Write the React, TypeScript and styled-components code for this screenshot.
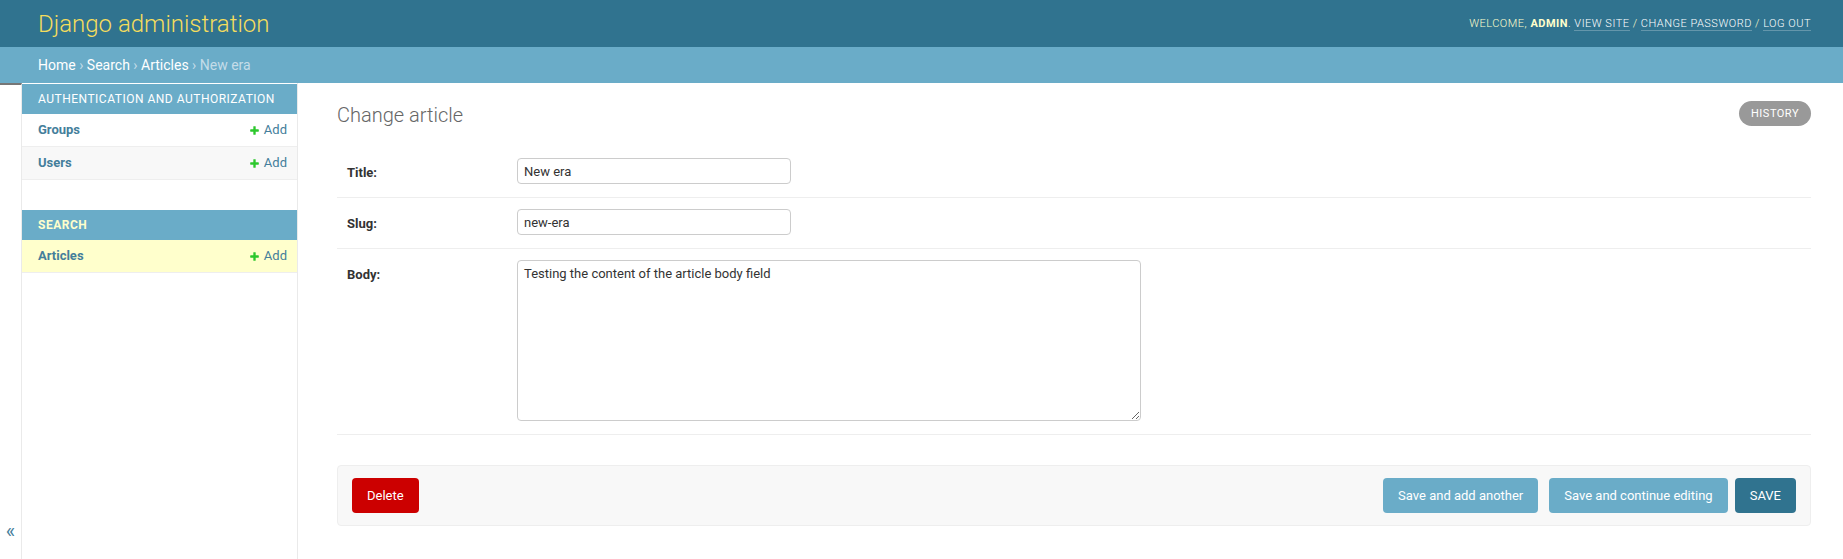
import React from "react";
import styled, { createGlobalStyle } from "styled-components";

const GlobalStyle = createGlobalStyle`
  * { box-sizing: border-box; }
  html, body { margin: 0; padding: 0; height: 100%; }
  body {
    font-family: Roboto, "Liberation Sans", Arial, sans-serif;
    font-size: 14px;
    color: #333;
    background: #fff;
  }
  #root { min-height: 100%; display: flex; flex-direction: column; }
`;

const Page = styled.div`
  flex: 1;
  display: flex;
  flex-direction: column;
  min-height: 100vh;
`;

const Header = styled.header`
  height: 47px;
  padding: 0 32px 0 38px;
  display: flex;
  align-items: center;
  justify-content: space-between;
  background: #30738f;
  color: #ffc;
`;

const Branding = styled.h1`
  margin: 0;
  font-size: 24px;
  font-weight: 300;
  line-height: 28px;
  color: #f5dd5d;
`;

const UserTools = styled.div`
  font-size: 11px;
  font-weight: 300;
  letter-spacing: 0.5px;
  text-transform: uppercase;
  color: #ffc;
  line-height: 16px;
  strong { font-weight: 700; }
`;

const ToolLink = styled.a`
  color: #fff;
  text-decoration: none;
  border-bottom: 1px solid rgba(255, 255, 255, 0.25);
`;

const Breadcrumbs = styled.nav`
  padding: 10px 38px;
  background: #6aacc8;
  color: #c4dce8;
  font-size: 14px;
  line-height: 16px;
  a { color: #fff; text-decoration: none; }
`;

const Main = styled.div`
  flex: 1;
  display: flex;
`;

const ToggleSidebar = styled.div`
  flex: 0 0 22px;
  width: 22px;
  border-top: 2px solid #767676;
  border-right: 1px solid #eaeaea;
  display: flex;
  flex-direction: column;
  justify-content: flex-end;
  align-items: center;
  padding-bottom: 16px;
  color: #447e9b;
  font-size: 20px;
  line-height: 23px;
`;

const NavSidebar = styled.nav`
  flex: 0 0 276px;
  width: 276px;
  border-right: 1px solid #eaeaea;
  padding-top: 1px;
`;

const AppModule = styled.div`
  margin-bottom: 30px;
`;

const ModuleCaption = styled.div<{ $current?: boolean }>`
  padding: 8px 8px 8px 16px;
  background: #6aacc8;
  font-size: 12px;
  line-height: 14px;
  letter-spacing: 0.5px;
  text-transform: uppercase;
  white-space: nowrap;
  color: ${(p) => (p.$current ? "#ffc" : "#fff")};
  font-weight: ${(p) => (p.$current ? 700 : 400)};
`;

const ModelRow = styled.div<{ $bg: string }>`
  display: flex;
  justify-content: space-between;
  align-items: center;
  padding: 8px 10px 8px 16px;
  line-height: 16px;
  font-size: 13px;
  background: ${(p) => p.$bg};
  border-bottom: 1px solid #eee;
`;

const ModelLink = styled.a`
  color: #447e9b;
  font-weight: 700;
  text-decoration: none;
`;

const AddLink = styled.a`
  display: flex;
  align-items: center;
  gap: 4px;
  color: #447e9b;
  text-decoration: none;
  svg { display: block; }
`;

const Content = styled.main`
  flex: 1;
  padding: 21px 32px 20px 39px;
  min-width: 0;
`;

const TitleBar = styled.div`
  display: flex;
  justify-content: space-between;
  align-items: flex-start;
  margin-bottom: 20px;
`;

const PageTitle = styled.h1`
  margin: 0;
  font-size: 20px;
  font-weight: 300;
  line-height: 23px;
  color: #666;
`;

const HistoryLink = styled.a`
  margin-top: -3px;
  display: block;
  padding: 3px 12px;
  line-height: 19px;
  font-size: 11px;
  letter-spacing: 0.5px;
  text-transform: uppercase;
  background: #999;
  color: #fff;
  border-radius: 15px;
  text-decoration: none;
`;

const Fieldset = styled.fieldset`
  margin: 0 0 30px;
  padding: 0;
  border: 0;
  min-width: 0;
`;

const FormRow = styled.div`
  display: flex;
  align-items: flex-start;
  padding: 11px 10px 13px;
  border-bottom: 1px solid #eee;
  font-size: 13px;
`;

const Label = styled.label`
  flex: 0 0 170px;
  padding: 7px 10px 0 0;
  line-height: 16px;
  font-weight: 700;
  color: #333;
`;

const TextInput = styled.input`
  width: 274px;
  height: 26px;
  padding: 5px 6px;
  border: 1px solid #ccc;
  border-radius: 4px;
  font-family: Roboto, "Liberation Sans", Arial, sans-serif;
  font-size: 13px;
  color: #333;
  background: #fff;
  margin: 0;
`;

const TextArea = styled.textarea`
  width: 624px;
  height: 161px;
  padding: 5px 6px;
  border: 1px solid #ccc;
  border-radius: 4px;
  font-family: Roboto, "Liberation Sans", Arial, sans-serif;
  font-size: 13px;
  line-height: 15px;
  color: #333;
  margin: 0;
  display: block;
`;

const SubmitRow = styled.div`
  display: flex;
  justify-content: space-between;
  align-items: center;
  padding: 12px 14px;
  background: #f8f8f8;
  border: 1px solid #eee;
  border-radius: 4px;
`;

const ButtonGroup = styled.div`
  display: flex;
`;

const bgFor = { primary: "#6aacc8", default: "#30738f", delete: "#cc0000" } as const;

const Button = styled.button<{ $variant: keyof typeof bgFor; $gap?: number }>`
  display: block;
  margin-left: ${(p) => p.$gap ?? 0}px;
  padding: 10px 15px;
  border: none;
  border-radius: 4px;
  background: ${(p) => bgFor[p.$variant]};
  color: #fff;
  font-family: Roboto, "Liberation Sans", Arial, sans-serif;
  font-size: 13px;
  line-height: 15px;
  text-transform: ${(p) => (p.$variant === "default" ? "uppercase" : "none")};
  cursor: pointer;
`;

const PlusIcon = () => (
  <svg width="11" height="11" viewBox="0 0 1792 1792" aria-hidden="true">
    <path
      fill="#2cc72c"
      d="M1600 796v192q0 40-28 68t-68 28h-416v416q0 40-28 68t-68 28h-192q-40 0-68-28t-28-68v-416h-416q-40 0-68-28t-28-68v-192q0-40 28-68t68-28h416v-416q0-40 28-68t68-28h192q40 0 68 28t28 68v416h416q40 0 68 28t28 68z"
    />
  </svg>
);

type AppDef = { name: string; current?: boolean; models: { name: string; current?: boolean }[] };

const apps: AppDef[] = [
  { name: "Authentication and Authorization", models: [{ name: "Groups" }, { name: "Users" }] },
  { name: "Search", current: true, models: [{ name: "Articles", current: true }] },
];

export default function App() {
  return (
    <Page>
      <GlobalStyle />
      <Header>
        <Branding>Django administration</Branding>
        <UserTools>
          Welcome, <strong>admin</strong>. <ToolLink href="#">View site</ToolLink> /{" "}
          <ToolLink href="#">Change password</ToolLink> / <ToolLink href="#">Log out</ToolLink>
        </UserTools>
      </Header>
      <Breadcrumbs>
        <a href="#">Home</a> › <a href="#">Search</a> › <a href="#">Articles</a> › New era
      </Breadcrumbs>
      <Main>
        <ToggleSidebar>«</ToggleSidebar>
        <NavSidebar>
          {apps.map((app) => (
            <AppModule key={app.name}>
              <ModuleCaption $current={app.current}>{app.name}</ModuleCaption>
              {app.models.map((m, i) => (
                <ModelRow key={m.name} $bg={m.current ? "#ffc" : i % 2 === 1 ? "#f8f8f8" : "#fff"}>
                  <ModelLink href="#">{m.name}</ModelLink>
                  <AddLink href="#">
                    <PlusIcon />
                    Add
                  </AddLink>
                </ModelRow>
              ))}
            </AppModule>
          ))}
        </NavSidebar>
        <Content>
          <TitleBar>
            <PageTitle>Change article</PageTitle>
            <HistoryLink href="#">History</HistoryLink>
          </TitleBar>
          <Fieldset>
            <FormRow>
              <Label htmlFor="id_title">Title:</Label>
              <TextInput id="id_title" type="text" defaultValue="New era" />
            </FormRow>
            <FormRow>
              <Label htmlFor="id_slug">Slug:</Label>
              <TextInput id="id_slug" type="text" defaultValue="new-era" />
            </FormRow>
            <FormRow>
              <Label htmlFor="id_body">Body:</Label>
              <TextArea id="id_body" defaultValue="Testing the content of the article body field" />
            </FormRow>
          </Fieldset>
          <SubmitRow>
            <Button $variant="delete">Delete</Button>
            <ButtonGroup>
              <Button $variant="primary">Save and add another</Button>
              <Button $variant="primary" $gap={11}>Save and continue editing</Button>
              <Button $variant="default" $gap={7}>Save</Button>
            </ButtonGroup>
          </SubmitRow>
        </Content>
      </Main>
    </Page>
  );
}
